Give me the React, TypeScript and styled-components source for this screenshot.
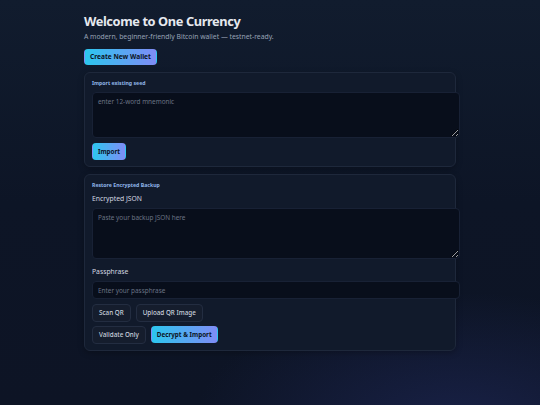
import React from 'react'
import styled, { createGlobalStyle } from 'styled-components'

const GlobalStyle = createGlobalStyle`
  html, body {
    margin: 0;
    padding: 0;
    min-height: 100%;
  }
  body {
    font-family: 'Noto Sans', 'Open Sans', sans-serif;
    background: #0e1627;
    color: #e5e7eb;
  }
`

const Page = styled.div`
  min-height: 405px;
  background:
    radial-gradient(ellipse 380px 190px at 85% 105%, rgba(36, 46, 104, 0.5), transparent 70%),
    linear-gradient(180deg, #111c2e 0%, #0d1526 50%, #0d1425 100%);
  padding-top: 11px;
  box-sizing: border-box;
`

const Container = styled.div`
  width: 372px;
  margin: 0 auto;
`

const Title = styled.h1`
  margin: 0;
  font-size: 12.8px;
  letter-spacing: -0.4px;
  line-height: 20px;
  font-weight: 700;
  color: #e6e9ef;
`

const Subtitle = styled.p`
  margin: 1px 0 0;
  font-size: 6.8px;
  line-height: 10px;
  color: #98a3b6;
`

const Button = styled.button<{ $primary?: boolean }>`
  font-family: inherit;
  font-size: 6.3px;
  line-height: 10px;
  height: ${p => (p.$primary ? '17px' : '18px')};
  padding: 0 ${p => (p.$primary ? 5 : 6)}px;
  border-radius: 4px;
  cursor: pointer;
  font-weight: ${p => (p.$primary ? 700 : 500)};
  color: ${p => (p.$primary ? '#0b1424' : '#c9d1dd')};
  background: ${p =>
    p.$primary ? 'linear-gradient(90deg, #2cc6ee 0%, #7f8cf6 100%)' : '#151d2d'};
  border: 1px solid ${p => (p.$primary ? 'transparent' : '#232d41')};
  white-space: nowrap;
`

const CreateButton = styled(Button)`
  margin-top: 7px;
  height: 16px;
  font-size: 6.6px;
`

const Card = styled.section`
  margin-top: 7px;
  background: #111a2b;
  border: 1px solid #1e283b;
  border-radius: 6px;
  padding: 6px 7px 6px;
  box-shadow: 0 2px 6px rgba(0, 0, 0, 0.25);
`

const SectionLabel = styled.div`
  font-size: 5.2px;
  line-height: 8px;
  font-weight: 700;
  color: #8fb5e8;
  margin-bottom: 5px;
`

const FieldLabel = styled.div`
  font-size: 6.8px;
  line-height: 10px;
  color: #d3d8e0;
  margin-bottom: 4px;
`

const TextArea = styled.textarea<{ $h: number }>`
  display: block;
  box-sizing: content-box;
  width: 100%;
  height: ${p => p.$h}px;
  padding: 4px 5px;
  margin: 0;
  border: 1px solid #182135;
  border-radius: 4px;
  background: #080e1b;
  color: #d1d5db;
  font-family: inherit;
  font-size: 6.4px;
  line-height: 10px;
  resize: vertical;
  outline: none;
  &::placeholder {
    color: #6a7384;
  }
`

const Input = styled.input`
  display: block;
  box-sizing: content-box;
  width: 100%;
  height: 16px;
  padding: 0 5px;
  margin: 0;
  border: 1px solid #182135;
  border-radius: 4px;
  background: #080e1b;
  color: #d1d5db;
  font-family: inherit;
  font-size: 6.4px;
  outline: none;
  &::placeholder {
    color: #6a7384;
  }
`

const Row = styled.div<{ $top?: number }>`
  display: flex;
  gap: 5px;
  margin-top: ${p => p.$top ?? 4}px;
`

const Spacer = styled.div<{ $h: number }>`
  height: ${p => p.$h}px;
`

export default function App() {
  return (
    <>
      <GlobalStyle />
      <Page>
        <Container>
          <Title>Welcome to One Currency</Title>
          <Subtitle>A modern, beginner-friendly Bitcoin wallet — testnet-ready.</Subtitle>
          <CreateButton $primary>Create New Wallet</CreateButton>

          <Card>
            <SectionLabel>Import existing seed</SectionLabel>
            <TextArea $h={36} placeholder="enter 12-word mnemonic" />
            <Row $top={5}>
              <Button $primary>Import</Button>
            </Row>
          </Card>

          <Card>
            <SectionLabel>Restore Encrypted Backup</SectionLabel>
            <FieldLabel>Encrypted JSON</FieldLabel>
            <TextArea $h={41} placeholder="Paste your backup JSON here" />
            <Spacer $h={8} />
            <FieldLabel>Passphrase</FieldLabel>
            <Input placeholder="Enter your passphrase" />
            <Row $top={5}>
              <Button>Scan QR</Button>
              <Button>Upload QR Image</Button>
            </Row>
            <Row>
              <Button>Validate Only</Button>
              <Button $primary>Decrypt &amp; Import</Button>
            </Row>
          </Card>
        </Container>
      </Page>
    </>
  )
}
